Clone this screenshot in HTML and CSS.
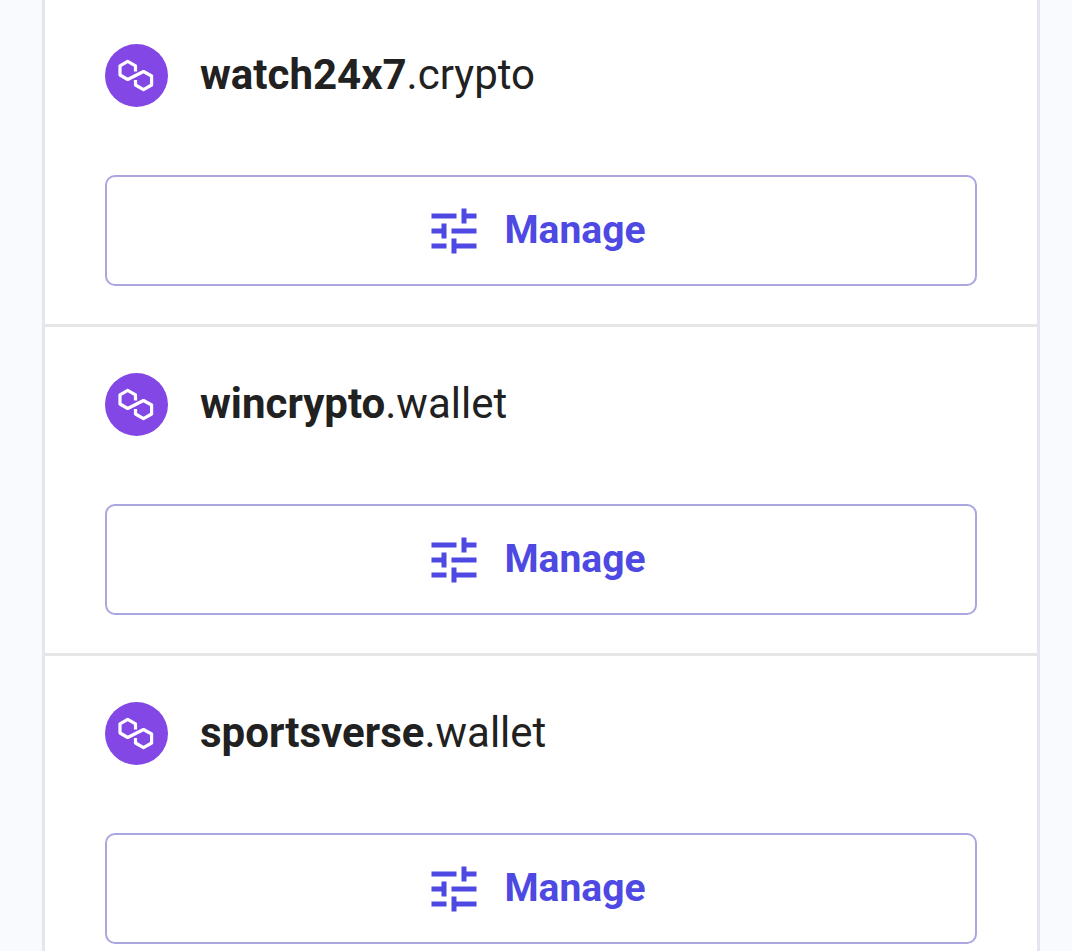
FILE: index.html
```html
<!DOCTYPE html>
<html lang="en">
<head>
<meta charset="utf-8">
<title>Domains</title>
<link rel="stylesheet" href="styles.css">
</head>
<body>
<main class="card">
  <section class="row">
    <div class="domain">
      <span class="logo"><svg viewBox="0 0 63 63" width="63" height="63"><path class="link" d="M30.5 27.5V21.8L22.7 17.3 15 21.8V31L22.7 35.5 38.5 27.5 46.6 32V41L38.5 45.6 30.5 41V36"/></svg></span>
      <span class="name"><b>watch24x7</b>.crypto</span>
    </div>
    <button class="manage"><svg class="tune" viewBox="0 0 24 24" width="60" height="60"><path d="M3 17v2h6v-2H3zM3 5v2h10V5H3zm10 16v-2h8v-2h-8v-2h-2v6h2zM7 9v2H3v2h4v2h2V9H7zm14 4v-2H11v2h10zm-6-4h2V7h4V5h-4V3h-2v6z"/></svg><span class="label">Manage</span></button>
  </section>
  <section class="row">
    <div class="domain">
      <span class="logo"><svg viewBox="0 0 63 63" width="63" height="63"><path class="link" d="M30.5 27.5V21.8L22.7 17.3 15 21.8V31L22.7 35.5 38.5 27.5 46.6 32V41L38.5 45.6 30.5 41V36"/></svg></span>
      <span class="name"><b>wincrypto</b>.wallet</span>
    </div>
    <button class="manage"><svg class="tune" viewBox="0 0 24 24" width="60" height="60"><path d="M3 17v2h6v-2H3zM3 5v2h10V5H3zm10 16v-2h8v-2h-8v-2h-2v6h2zM7 9v2H3v2h4v2h2V9H7zm14 4v-2H11v2h10zm-6-4h2V7h4V5h-4V3h-2v6z"/></svg><span class="label">Manage</span></button>
  </section>
  <section class="row">
    <div class="domain">
      <span class="logo"><svg viewBox="0 0 63 63" width="63" height="63"><path class="link" d="M30.5 27.5V21.8L22.7 17.3 15 21.8V31L22.7 35.5 38.5 27.5 46.6 32V41L38.5 45.6 30.5 41V36"/></svg></span>
      <span class="name"><b>sportsverse</b>.wallet</span>
    </div>
    <button class="manage"><svg class="tune" viewBox="0 0 24 24" width="60" height="60"><path d="M3 17v2h6v-2H3zM3 5v2h10V5H3zm10 16v-2h8v-2h-8v-2h-2v6h2zM7 9v2H3v2h4v2h2V9H7zm14 4v-2H11v2h10zm-6-4h2V7h4V5h-4V3h-2v6z"/></svg><span class="label">Manage</span></button>
  </section>
</main>
</body>
</html>
```
FILE: styles.css
```css
html, body {
  margin: 0;
  padding: 0;
  height: 951px;
  overflow: hidden;
  background: #f9fafe;
}
body {
  font-family: Roboto, "Liberation Sans", sans-serif;
  color: #212121;
}
.card {
  box-sizing: border-box;
  width: 998px;
  margin: -2px 0 0 42px;
  background: #fff;
  border-left: 3px solid #e3e6f0;
  border-right: 3px solid #e3e6f0;
}
.row {
  box-sizing: border-box;
  height: 329px;
  padding: 46px 60px 0;
  border-bottom: 3px solid #e6e6e8;
}
.domain {
  display: flex;
  align-items: center;
  gap: 32px;
  height: 63px;
}
.logo {
  display: block;
  width: 63px;
  height: 63px;
  border-radius: 50%;
  background: #8247e5;
}
.logo svg { display: block; }
.link {
  fill: none;
  stroke: #fff;
  stroke-width: 3.2;
  stroke-linejoin: round;
}
.name {
  margin-bottom: 2px;
  font-size: 42px;
  line-height: 63px;
  font-weight: 400;
}
.name b { font-weight: 700; }
.manage {
  box-sizing: border-box;
  display: flex;
  align-items: center;
  justify-content: center;
  gap: 20px;
  width: 872px;
  height: 111px;
  margin-top: 68px;
  padding: 0 12px 0 0;
  background: #fff;
  border: 2px solid #aaa7e0;
  border-radius: 10px;
  font-family: inherit;
  font-size: 39px;
  font-weight: 700;
  color: #4d49e2;
}
.label { margin-bottom: 2px; }
.tune { display: block; fill: #4d49e2; }
```
